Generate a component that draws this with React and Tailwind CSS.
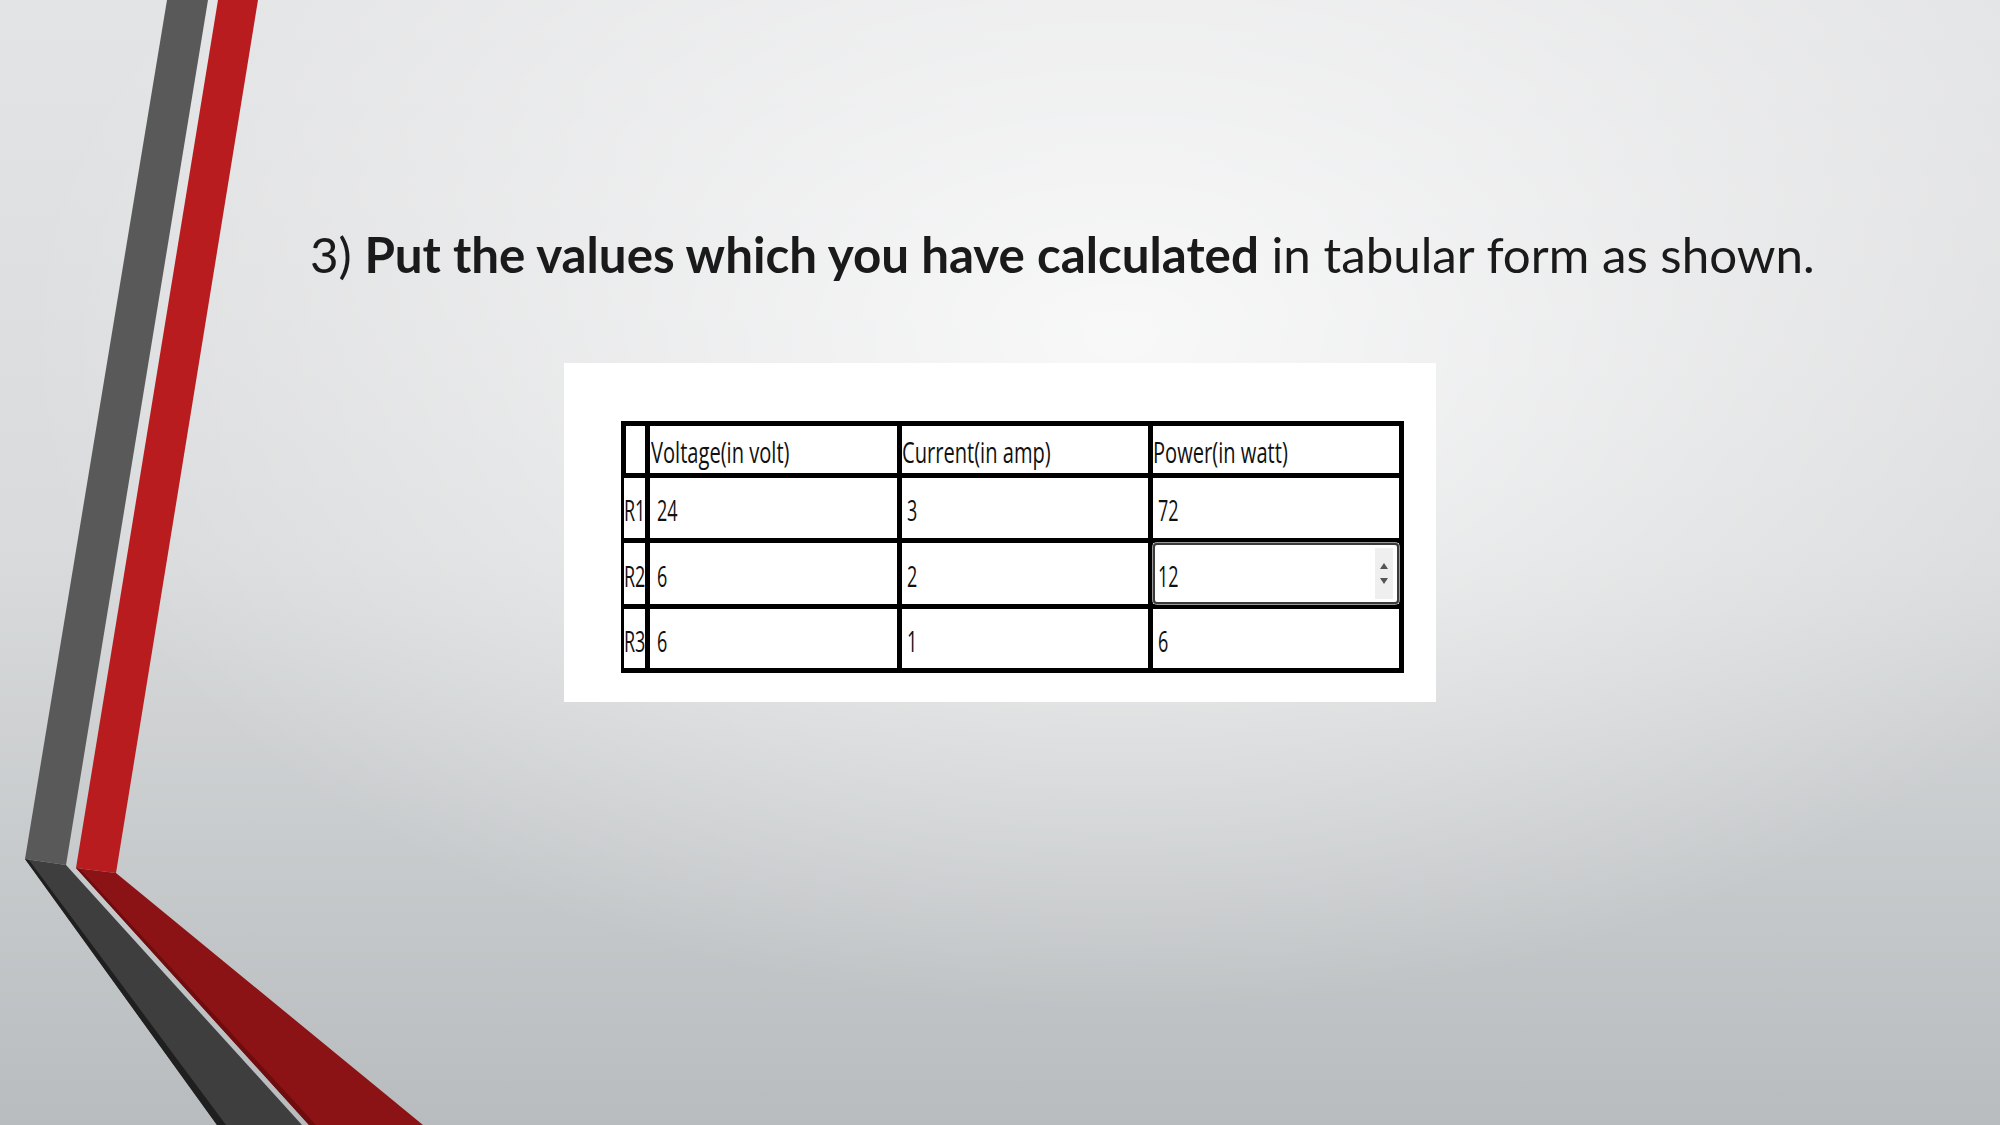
import React from 'react'

const cellFont = { fontFamily: '"Open Sans", "Noto Sans", sans-serif' }

// squeezed text, the source table was a stretched screenshot
const Squeeze = ({ children, wide }) => (
  <span
    className={`inline-block origin-left whitespace-nowrap text-[30px] leading-none text-[#111] ${
      wide ? 'scale-x-[0.67]' : 'scale-x-[0.6]'
    }`}
  >
    {children}
  </span>
)

const Cell = ({ children, pad = 'pl-[5px]', wide }) => (
  <div className={`bg-white flex items-center pt-[4px] overflow-visible ${pad}`} style={cellFont}>
    {children != null && <Squeeze wide={wide}>{children}</Squeeze>}
  </div>
)

const NumberInput = ({ value }) => (
  <div className="bg-white flex items-stretch" style={cellFont}>
    <div className="flex-1 flex items-stretch rounded-[4px] border-[2px] border-[#3a3a3a] shadow-[0_0_0_1px_#9a9a9a] bg-white">
      <div className="flex-1 flex items-center pl-[3px] pt-[4px]">
        <Squeeze>{value}</Squeeze>
      </div>
      <div className="w-[18px] my-[3px] mr-[4px] bg-[#efefef] flex flex-col items-center justify-center gap-[9px]">
        <svg width="8" height="6" viewBox="0 0 8 6"><path d="M4 0L8 6H0z" fill="#555" /></svg>
        <svg width="8" height="6" viewBox="0 0 8 6"><path d="M0 0H8L4 6z" fill="#555" /></svg>
      </div>
    </div>
  </div>
)

const Stripes = () => (
  <svg className="absolute left-0 top-0 pointer-events-none" width="2000" height="1125" viewBox="0 0 2000 1125">
    <polygon points="167,0 208,0 66,865 25,859" fill="#595959" />
    <polygon points="218,0 258,0 116,873 76,868" fill="#b81c1e" />
    <polygon points="25,859 66,865 302,1125 217,1125" fill="#3e3e3e" />
    <polygon points="25,859 29,860 226,1125 217,1125" fill="#1f1f1f" />
    <polygon points="76,868 116,873 423,1125 309,1125" fill="#8b1315" />
    <polygon points="76,868 80,869 316,1125 309,1125" fill="#6e0c0e" />
  </svg>
)

export default function App() {
  const rows = [
    ['R1', '24', '3', '72'],
    ['R2', '6', '2', '12'],
    ['R3', '6', '1', '6'],
  ]

  return (
    <div className="relative w-[2000px] h-[1125px] overflow-hidden bg-[radial-gradient(ellipse_55%_60%_at_56%_30%,rgba(255,255,255,0.8),rgba(255,255,255,0)),linear-gradient(to_bottom,#e3e4e5,#d8dadb_50%,#b8bcbe)]">
      <Stripes />

      <div className="relative flex flex-col pl-[310px] pt-[225px]">
        <h1
          className="text-[49.3px] leading-[1.2] text-[#1a1a1a] whitespace-nowrap"
          style={{ fontFamily: 'Lato, "Open Sans", sans-serif' }}
        >
          3) <span className="font-bold">Put the values which you have calculated</span> in tabular form as shown.
        </h1>

        <div className="ml-[254px] mt-[79px] w-[872px] h-[339px] bg-white pl-[57px] pt-[58px]">
          <div className="w-[783px] grid grid-cols-[19px_247px_246px_246px] grid-rows-[47px_60px_61px_59px] gap-[5px] p-[5px] bg-black">
            <div className="bg-white" />
            <Cell pad="pl-[1px]" wide>Voltage(in volt)</Cell>
            <Cell pad="pl-0" wide>Current(in amp)</Cell>
            <Cell pad="pl-0" wide>Power(in watt)</Cell>
            {rows.map(([label, v, c, p]) => (
              <React.Fragment key={label}>
                <div className="bg-white flex items-center pt-[4px] -ml-[2px] overflow-visible" style={cellFont}>
                  <Squeeze>{label}</Squeeze>
                </div>
                <Cell pad="pl-[7px]">{v}</Cell>
                <Cell>{c}</Cell>
                {label === 'R2' ? <NumberInput value={p} /> : <Cell>{p}</Cell>}
              </React.Fragment>
            ))}
          </div>
        </div>
      </div>
    </div>
  )
}
